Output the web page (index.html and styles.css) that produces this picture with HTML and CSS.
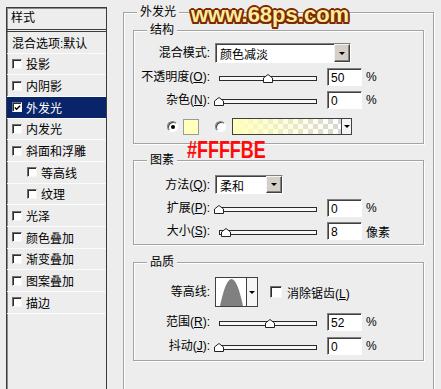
FILE: index.html
```html
<!DOCTYPE html>
<html lang="zh-CN">
<head>
    <meta charset="UTF-8">
    <meta name="viewport" content="width=device-width, initial-scale=1.0">
    <title>图层样式 - 外发光</title>
    <link rel="stylesheet" href="styles.css">
</head>
<body>
    <div class="dialog">
        <div class="style-panel">
            <div class="style-head">样式</div>
            <ul class="style-list">
                <li class="style-item">混合选项:默认</li>
                <li class="style-item"><span class="check"></span>投影</li>
                <li class="style-item"><span class="check"></span>内阴影</li>
                <li class="style-item selected">
                    <span class="check"><svg width="8" height="8" viewBox="0 0 8 8"><path d="M1 3.5 L3 5.5 L7 1.5" fill="none" stroke="#000" stroke-width="1.7"/></svg></span>外发光
                </li>
                <li class="style-item"><span class="check"></span>内发光</li>
                <li class="style-item"><span class="check"></span>斜面和浮雕</li>
                <li class="style-item sub"><span class="check"></span>等高线</li>
                <li class="style-item sub"><span class="check"></span>纹理</li>
                <li class="style-item"><span class="check"></span>光泽</li>
                <li class="style-item"><span class="check"></span>颜色叠加</li>
                <li class="style-item"><span class="check"></span>渐变叠加</li>
                <li class="style-item"><span class="check"></span>图案叠加</li>
                <li class="style-item"><span class="check"></span>描边</li>
            </ul>
        </div>

        <div class="group outer">
            <div class="group-title">外发光</div>

            <div class="group inner structure">
                <div class="group-title">结构</div>
                <div class="row row-select">
                    <span class="label">混合模式:</span>
                    <div class="select select-blend">
                        <span class="select-text">颜色减淡</span>
                        <span class="select-btn"><span class="arrow"></span></span>
                    </div>
                </div>
                <div class="row">
                    <span class="label">不透明度(<u>O</u>):</span>
                    <div class="slider"><span class="track"></span><span class="thumb" style="left:48px"><svg width="10" height="9" viewBox="0 0 10 9"><path d="M0.5 8.5 V4 L5 0.5 L9.5 4 V8.5 Z" fill="#fff" stroke="#222"/></svg></span></div>
                    <input class="num" type="text" value="50" readonly>
                    <span class="unit">%</span>
                </div>
                <div class="row">
                    <span class="label">杂色(<u>N</u>):</span>
                    <div class="slider"><span class="track"></span><span class="thumb" style="left:-1px"><svg width="10" height="9" viewBox="0 0 10 9"><path d="M0.5 8.5 V4 L5 0.5 L9.5 4 V8.5 Z" fill="#fff" stroke="#222"/></svg></span></div>
                    <input class="num" type="text" value="0" readonly>
                    <span class="unit">%</span>
                </div>
                <div class="row row-color">
                    <span class="radio on"></span>
                    <span class="swatch"></span>
                    <span class="radio second"></span>
                    <div class="gradient">
                        <span class="gradient-bar"></span>
                        <span class="gradient-btn"><span class="arrow"></span></span>
                    </div>
                </div>
            </div>

            <div class="group inner elements">
                <div class="group-title">图素</div>
                <div class="row row-method">
                    <span class="label">方法(<u>Q</u>):</span>
                    <div class="select select-method">
                        <span class="select-text">柔和</span>
                        <span class="select-btn"><span class="arrow"></span></span>
                    </div>
                </div>
                <div class="row">
                    <span class="label">扩展(<u>P</u>):</span>
                    <div class="slider"><span class="track"></span><span class="thumb" style="left:-1px"><svg width="10" height="9" viewBox="0 0 10 9"><path d="M0.5 8.5 V4 L5 0.5 L9.5 4 V8.5 Z" fill="#fff" stroke="#222"/></svg></span></div>
                    <input class="num" type="text" value="0" readonly>
                    <span class="unit">%</span>
                </div>
                <div class="row">
                    <span class="label">大小(<u>S</u>):</span>
                    <div class="slider"><span class="track"></span><span class="thumb" style="left:6px"><svg width="10" height="9" viewBox="0 0 10 9"><path d="M0.5 8.5 V4 L5 0.5 L9.5 4 V8.5 Z" fill="#fff" stroke="#222"/></svg></span></div>
                    <input class="num" type="text" value="8" readonly>
                    <span class="unit">像素</span>
                </div>
            </div>

            <div class="group inner quality">
                <div class="group-title">品质</div>
                <div class="row row-contour">
                    <span class="label">等高线:</span>
                    <div class="contour">
                        <span class="contour-preview"><svg width="30" height="28" viewBox="0 0 30 28"><path d="M4 28 Q15.5 -26 27 28 Z" fill="#808080"/></svg></span>
                        <span class="contour-btn"><span class="arrow"></span></span>
                    </div>
                    <span class="check big"></span>
                    <span class="check-label">消除锯齿(<u>L</u>)</span>
                </div>
                <div class="row row-gap">
                    <span class="label">范围(<u>R</u>):</span>
                    <div class="slider"><span class="track"></span><span class="thumb" style="left:50px"><svg width="10" height="9" viewBox="0 0 10 9"><path d="M0.5 8.5 V4 L5 0.5 L9.5 4 V8.5 Z" fill="#fff" stroke="#222"/></svg></span></div>
                    <input class="num" type="text" value="52" readonly>
                    <span class="unit">%</span>
                </div>
                <div class="row row-gap">
                    <span class="label">抖动(<u>J</u>):</span>
                    <div class="slider"><span class="track"></span><span class="thumb" style="left:-1px"><svg width="10" height="9" viewBox="0 0 10 9"><path d="M0.5 8.5 V4 L5 0.5 L9.5 4 V8.5 Z" fill="#fff" stroke="#222"/></svg></span></div>
                    <input class="num" type="text" value="0" readonly>
                    <span class="unit">%</span>
                </div>
            </div>
        </div>
    </div>

    <div class="watermark">www.68ps.com</div>
    <div class="note">#FFFFBE</div>
</body>
</html>
```

FILE: styles.css
```css
* {
    box-sizing: border-box;
}

body {
    margin: 0;
    width: 441px;
    height: 389px;
    overflow: hidden;
    position: relative;
    background: #ededed;
    color: #000;
    font-family: "Liberation Sans", "Noto Sans CJK SC", sans-serif;
    font-size: 12px;
}

.dialog {
    display: flex;
    align-items: flex-start;
}

/* left list of styles */
.style-panel {
    margin: 7px 0 0 6px;
    width: 101px;
    height: 382px;
    border: 1px solid #3c3c3c;
    border-bottom: none;
    box-shadow: inset 1px 1px #8a8a8a;
}

.style-head {
    height: 22px;
    line-height: 21px;
    padding-left: 4px;
    border-bottom: 1px solid #3c3c3c;
}

.style-list {
    list-style: none;
    margin: 1px 0 0;
    padding: 0;
    border-top: 1px solid #3c3c3c;
}

.style-item {
    display: flex;
    align-items: center;
    gap: 4px;
    height: 21.67px;
    padding-left: 5px;
    border-bottom: 1px solid #fbfbfb;
    white-space: nowrap;
}

.style-item.sub {
    padding-left: 20px;
}

.style-item.selected {
    background: #0a246a;
    color: #fff;
}

.check {
    display: inline-flex;
    align-items: center;
    justify-content: center;
    flex: none;
    width: 10px;
    height: 10px;
    background: #fff;
    border: 1px solid;
    border-color: #6e6e6e #f6f6f6 #f6f6f6 #6e6e6e;
    box-shadow: inset 1px 1px #2c2c2c;
}

.check svg {
    margin: 1px 0 0 1px;
}

.check.big {
    width: 12px;
    height: 12px;
    margin-left: 12px;
}

.check-label {
    margin-left: 5px;
}

/* group boxes */
.group {
    border: 1px solid #a3a3a3;
    box-shadow: 1px 1px #fff, inset 1px 1px #fff;
}

.group-title {
    width: fit-content;
    height: 14px;
    line-height: 14px;
    margin: -8px 0 0 13px;
    padding: 0 3px;
    background: #ededed;
}

.outer {
    margin: 12px 0 0 16px;
    width: 311px;
    height: 377px;
    border-bottom: none;
}

.inner {
    margin: 11px 9px 0;
}

.structure {
    padding-bottom: 8px;
}

.elements {
    margin-top: 16px;
    padding-bottom: 4px;
}

.quality {
    margin-top: 17px;
    padding-bottom: 5px;
}

.row {
    display: flex;
    align-items: center;
    height: 18px;
    margin-top: 5px;
    white-space: nowrap;
}

.row-select {
    height: 20px;
    margin-top: 6px;
}

.row-color {
    height: 17px;
    margin-top: 9px;
}

.row-method {
    height: 19px;
    margin-top: 8px;
}

.row-contour {
    height: 30px;
    margin-top: 8px;
}

.row-gap {
    margin-top: 6px;
}

.label {
    flex: none;
    width: 76px;
    margin-right: 5px;
    text-align: right;
    line-height: 14px;
}

.label u {
    text-underline-offset: 1px;
}

/* dropdowns */
.select {
    display: flex;
    height: 100%;
    background: #fff;
    border: 1px solid;
    border-color: #808080 #fff #fff #808080;
    box-shadow: inset 1px 1px #404040;
}

.select-blend {
    width: 136px;
}

.select-method {
    width: 68px;
}

.select-text {
    flex: 1;
    padding: 1px 0 0 4px;
    display: flex;
    align-items: center;
}

.select-btn {
    width: 16px;
    display: flex;
    align-items: center;
    justify-content: center;
    background: #d4d0c8;
    border: 1px solid;
    border-color: #f4f4f4 #404040 #404040 #f4f4f4;
    box-shadow: inset -1px -1px #808080;
}

.arrow {
    width: 0;
    height: 0;
    border-left: 3px solid transparent;
    border-right: 3px solid transparent;
    border-top: 3px solid #000;
}

/* sliders and number fields */
.slider {
    position: relative;
    flex: none;
    display: flex;
    align-items: center;
    width: 104px;
    height: 100%;
    margin-right: 8px;
}

.track {
    width: 98px;
    height: 5px;
    margin: 3px 0 0 4px;
    background: #f8f8f8;
    border: 1px solid #2a2a2a;
}

.thumb {
    position: absolute;
    top: 6px;
    height: 9px;
    display: flex;
}

.num {
    width: 35px;
    height: 18px;
    margin: 0;
    padding: 1px 0 0 3px;
    font: inherit;
    color: #000;
    background: #fff;
    border: 1px solid;
    border-color: #808080 #fff #fff #808080;
    box-shadow: inset 1px 1px #404040;
    outline: none;
}

.unit {
    margin-left: 4px;
}

/* glow colour */
.radio {
    position: relative;
    flex: none;
    width: 11px;
    height: 11px;
    border-radius: 50%;
    background: #fff;
    border: 1px solid;
    border-color: #808080 #fff #fff #808080;
    box-shadow: inset 1px 1px #404040;
    margin-left: 33px;
}

.radio.on::after {
    content: "";
    position: absolute;
    left: 3px;
    top: 3px;
    width: 4px;
    height: 4px;
    border-radius: 50%;
    background: #000;
}

.radio.second {
    margin-left: 16px;
}

.swatch {
    flex: none;
    width: 16px;
    height: 16px;
    margin-left: 5px;
    background: #ffffbe;
    border: 1px solid #9a9a9a;
}

.gradient {
    display: flex;
    width: 120px;
    height: 17px;
    margin-left: 6px;
    border: 1px solid #404040;
}

.gradient-bar {
    flex: 1;
    background:
        linear-gradient(to right, #ffffbe, rgba(255, 255, 190, 0)),
        repeating-conic-gradient(#d6d6d6 0 25%, #fff 0 50%) 0 0 / 10px 10px;
}

.gradient-btn {
    width: 10px;
    display: flex;
    align-items: center;
    justify-content: center;
    background: #f4f4f4;
    border-left: 1px solid #404040;
}

/* contour picker */
.contour {
    display: flex;
    width: 43px;
    height: 30px;
    border: 1px solid #404040;
}

.contour-preview {
    width: 30px;
    display: flex;
    align-items: flex-end;
    background: #fff;
}

.contour-btn {
    flex: 1;
    display: flex;
    align-items: center;
    justify-content: center;
    background: #f6f6f6;
    border-left: 1px solid #404040;
}

/* overlaid captions */
.watermark {
    position: absolute;
    left: 191px;
    top: 2px;
    font-family: "Liberation Sans", sans-serif;
    font-weight: bold;
    font-size: 22px;
    color: #fcec9e;
    text-shadow:
        2px 0 #7d2a02, -2px 0 #7d2a02, 0 2px #7d2a02, 0 -2px #7d2a02,
        1.5px 1.5px #7d2a02, -1.5px 1.5px #7d2a02, 1.5px -1.5px #7d2a02, -1.5px -1.5px #7d2a02,
        1px 0 #7d2a02, -1px 0 #7d2a02, 0 1px #7d2a02, 0 -1px #7d2a02;
}

.note {
    position: absolute;
    left: 187px;
    top: 137px;
    font-family: "Liberation Sans", sans-serif;
    font-weight: bold;
    font-size: 23px;
    color: #ff0a0a;
    transform: scaleX(0.78);
    transform-origin: left top;
}
```
